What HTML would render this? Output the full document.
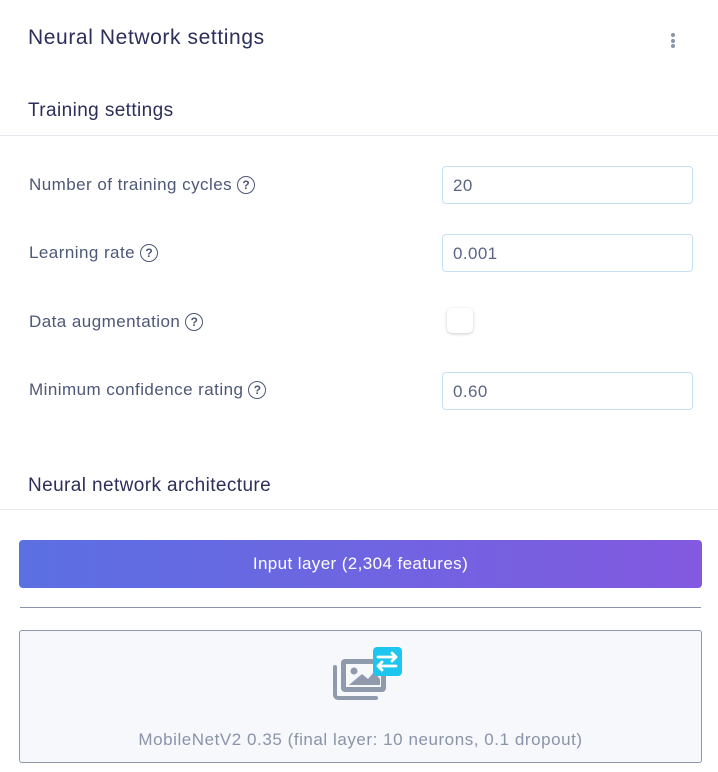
<!DOCTYPE html>
<html><head><style>
*{margin:0;padding:0;box-sizing:border-box}
body{width:718px;height:772px;background:#fff;font-family:"Liberation Sans",sans-serif;position:relative;overflow:hidden}
.a{position:absolute}
.h{color:#2b2f5a;font-size:21px;letter-spacing:.6px}
.lbl{color:#4d5878;font-size:17px;letter-spacing:.45px;left:29px;display:flex;align-items:center;gap:5px}
.q{width:18px;height:18px;border:1.8px solid #4d5878;border-radius:50%;font-size:12px;font-weight:bold;letter-spacing:0;display:flex;align-items:center;justify-content:center}
.in{left:442px;width:251px;height:38px;border:1px solid #c5e2f3;border-radius:4px;color:#5b6585;font-size:17px;letter-spacing:.4px;padding-left:10px;line-height:38px}
.hr{left:0;width:718px;height:1px;background:#e8eaef}
</style></head><body>
<div class="a h" style="left:28px;top:26px">Neural Network settings</div>
<div class="a" style="left:671px;top:33px;width:4px">
<div style="width:4px;height:4px;border-radius:2px;background:#8a94a8;margin-bottom:1.5px"></div>
<div style="width:4px;height:4px;border-radius:2px;background:#8a94a8;margin-bottom:1.5px"></div>
<div style="width:4px;height:4px;border-radius:2px;background:#8a94a8"></div></div>
<div class="a h" style="left:28px;top:100px;font-size:19px;letter-spacing:.4px">Training settings</div>
<div class="a hr" style="top:135px"></div>
<div class="a lbl" style="top:175px">Number of training cycles <span class="q">?</span></div>
<div class="a in" style="top:166px">20</div>
<div class="a lbl" style="top:243px">Learning rate <span class="q">?</span></div>
<div class="a in" style="top:234px">0.001</div>
<div class="a lbl" style="top:312px">Data augmentation <span class="q">?</span></div>
<div class="a" style="left:447px;top:308px;width:26px;height:25px;border-radius:5px;background:#fff;box-shadow:0 1px 3px rgba(0,0,0,.2)"></div>
<div class="a lbl" style="top:380px">Minimum confidence rating <span class="q">?</span></div>
<div class="a in" style="top:372px">0.60</div>
<div class="a h" style="left:28px;top:475px;font-size:19px;letter-spacing:.4px">Neural network architecture</div>
<div class="a hr" style="top:509px"></div>
<div class="a" style="left:19px;top:540px;width:683px;height:48px;border-radius:4px;background:linear-gradient(90deg,#5b70e2,#8259e0);color:#fff;font-size:17px;letter-spacing:.4px;text-align:center;line-height:48px">Input layer (2,304 features)</div>
<div class="a" style="left:20px;top:607px;width:681px;height:1px;background:#8a94b0"></div>
<div class="a" style="left:19px;top:630px;width:683px;height:133px;border:1px solid #8f98ad;border-radius:3px;background:#f6f8fb"></div>
<svg class="a" style="left:330px;top:645px" width="74" height="58" viewBox="0 0 74 58">
<path d="M5 22 v28 a3 3 0 0 0 3 3 h38" fill="none" stroke="#8f9aac" stroke-width="4" stroke-linecap="round"/>
<rect x="11" y="14" width="45" height="33" rx="4" fill="#8f9aac"/>
<rect x="16" y="19" width="35" height="23" fill="#f6f8fb"/>
<circle cx="24" cy="26" r="3.5" fill="#8f9aac"/>
<path d="M19 40 L32 29 L38 34 L44 27 L50 34 V40 Z" fill="#8f9aac"/>
<rect x="43" y="2" width="29" height="29" rx="4" fill="#1cc6ef"/>
<path d="M48 12 h18 M48 21 h18 M52 17 l-4 4 l4 4" fill="none" stroke="#fff" stroke-width="2.8" stroke-linecap="round" stroke-linejoin="round"/>
<path d="M62 8 l4 4 l-4 4" fill="none" stroke="#fff" stroke-width="2.8" stroke-linecap="round" stroke-linejoin="round"/>
</svg>
<div class="a" style="left:19px;width:683px;top:730px;text-align:center;color:#8a93a8;font-size:17px;letter-spacing:.55px">MobileNetV2 0.35 (final layer: 10 neurons, 0.1 dropout)</div>
</body></html>
